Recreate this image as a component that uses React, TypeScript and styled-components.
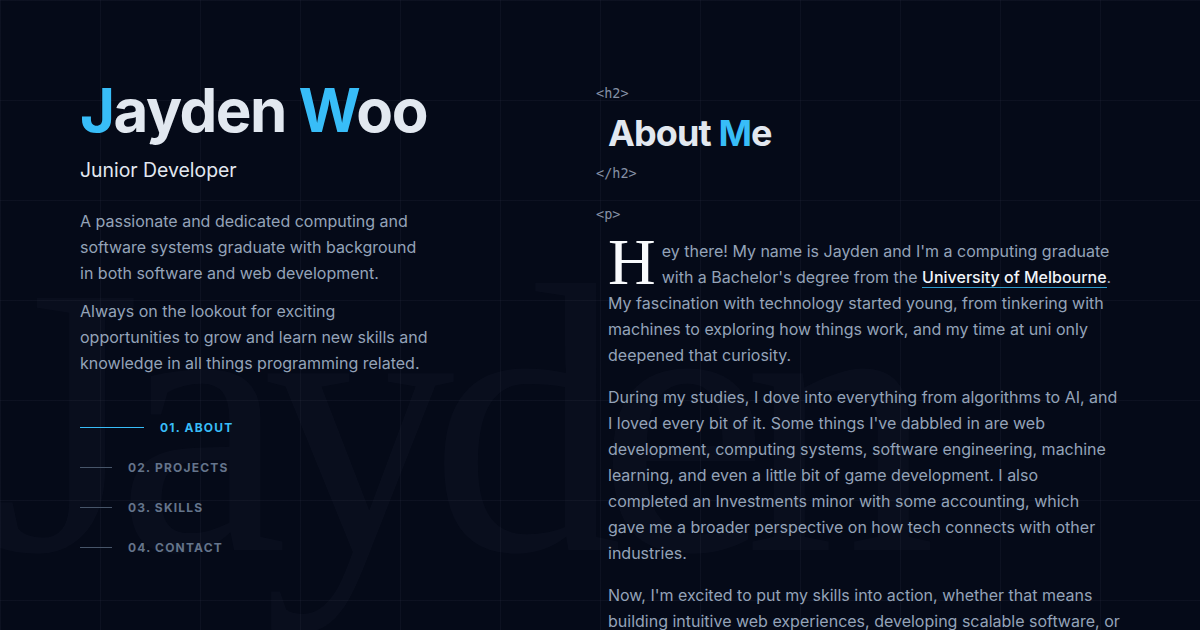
import React from "react";
import styled, { createGlobalStyle } from "styled-components";

const Global = createGlobalStyle`
  html, body { margin: 0; padding: 0; background: #050a18; }
  * { box-sizing: border-box; }
`;

const Page = styled.div`
  position: relative;
  width: 1200px;
  height: 630px;
  overflow: hidden;
  background-color: #050a18;
  background-image:
    linear-gradient(to right, rgba(148, 163, 184, 0.055) 1px, transparent 1px),
    linear-gradient(to bottom, rgba(148, 163, 184, 0.055) 1px, transparent 1px);
  background-size: 100px 100px;
  font-family: Inter, "Noto Sans", sans-serif;
`;

const Watermark = styled.div`
  position: absolute;
  left: -8px;
  top: 228px;
  font-family: "Liberation Serif", "DejaVu Serif", serif;
  font-size: 385px;
  line-height: 1;
  letter-spacing: -25px;
  color: rgba(148, 163, 184, 0.032);
  white-space: nowrap;
  pointer-events: none;
  user-select: none;
`;

const Layout = styled.main`
  position: relative;
  display: grid;
  grid-template-columns: 516px 1fr;
  padding-left: 80px;
`;

const Left = styled.section`
  padding-top: 80px;
`;

const Name = styled.h1`
  margin: 0;
  font-size: 60px;
  line-height: 1;
  font-weight: 700;
  letter-spacing: -0.025em;
  color: #e2e8f0;
`;

const Accent = styled.span`
  color: #38bdf8;
`;

const Role = styled.h2`
  margin: 16px 0 0;
  font-size: 19.4px;
  line-height: 28px;
  font-weight: 400;
  color: #e2e8f0;
`;

const Intro = styled.p`
  margin: 0;
  max-width: 350px;
  font-size: 16px;
  line-height: 26px;
  color: #94a3b8;
  & + & { margin-top: 12px; }
  &:first-of-type { margin-top: 24px; }
`;

const Nav = styled.nav`
  margin-top: 43px;
  display: flex;
  flex-direction: column;
  gap: 24px;
`;

const NavItem = styled.a<{ $active?: boolean }>`
  display: flex;
  align-items: center;
  gap: 16px;
  height: 16px;
  font-size: 12px;
  font-weight: 700;
  letter-spacing: 0.1em;
  text-transform: uppercase;
  text-decoration: none;
  color: ${(p) => (p.$active ? "#38bdf8" : "#64748b")};
`;

const NavLine = styled.span<{ $active?: boolean }>`
  display: block;
  height: 1px;
  width: ${(p) => (p.$active ? "64px" : "32px")};
  background: ${(p) => (p.$active ? "#38bdf8" : "#475569")};
`;

const Right = styled.section`
  padding-top: 83px;
  width: 524px;
`;

const Tag = styled.div<{ $gap?: number }>`
  font-family: "DejaVu Sans Mono", "Liberation Mono", monospace;
  font-size: 13.5px;
  line-height: 20px;
  color: #8591a5;
  margin-top: ${(p) => p.$gap ?? 0}px;
`;

const Title = styled.h2`
  margin: 10px 0 10px 12px;
  font-size: 36px;
  line-height: 40px;
  font-weight: 700;
  letter-spacing: -0.025em;
  color: #e2e8f0;
`;

const Body = styled.div`
  margin: 14px 0 0 12px;
  width: 512px;
`;

const Para = styled.p`
  margin: 0 0 16px;
  font-size: 16px;
  line-height: 26px;
  color: #94a3b8;
`;

const DropCap = styled.span`
  float: left;
  font-family: "Liberation Serif", "DejaVu Serif", serif;
  font-size: 66px;
  line-height: 48px;
  color: #f8fafc;
  margin: 0 6px 0 0;
`;

const Link = styled.a`
  color: #f1f5f9;
  font-weight: 500;
  text-decoration: none;
  border-bottom: 1px solid rgba(56, 189, 248, 0.8);
`;

const navItems = [
  { label: "01. About", active: true },
  { label: "02. Projects" },
  { label: "03. Skills" },
  { label: "04. Contact" },
];

export default function App() {
  return (
    <Page>
      <Global />
      <Watermark aria-hidden>Jayden</Watermark>
      <Layout>
        <Left>
          <Name>
            <Accent>J</Accent>ayden <Accent>W</Accent>oo
          </Name>
          <Role>Junior Developer</Role>
          <Intro>
            A passionate and dedicated computing and software systems graduate
            with background in both software and web development.
          </Intro>
          <Intro>
            Always on the lookout for exciting opportunities to grow and learn
            new skills and knowledge in all things programming related.
          </Intro>
          <Nav>
            {navItems.map((n) => (
              <NavItem key={n.label} href="#" $active={n.active}>
                <NavLine $active={n.active} />
                {n.label}
              </NavItem>
            ))}
          </Nav>
        </Left>
        <Right>
          <Tag>&lt;h2&gt;</Tag>
          <Title>
            About <Accent>M</Accent>e
          </Title>
          <Tag>&lt;/h2&gt;</Tag>
          <Tag $gap={21}>&lt;p&gt;</Tag>
          <Body>
            <Para>
              <DropCap>H</DropCap>ey there! My name is Jayden and I'm a
              computing graduate with a Bachelor's degree from the{" "}
              <Link href="#">University of Melbourne</Link>. My fascination
              with technology started young, from tinkering with machines to
              exploring how things work, and my time at uni only deepened that
              curiosity.
            </Para>
            <Para>
              During my studies, I dove into everything from algorithms to AI,
              and I loved every bit of it. Some things I've dabbled in are web
              development, computing systems, software engineering, machine
              learning, and even a little bit of game development. I also
              completed an Investments minor with some accounting, which gave
              me a broader perspective on how tech connects with other
              industries.
            </Para>
            <Para>
              Now, I'm excited to put my skills into action, whether that means
              building intuitive web experiences, developing scalable software,
              or diving into new challenges.
            </Para>
          </Body>
        </Right>
      </Layout>
    </Page>
  );
}
